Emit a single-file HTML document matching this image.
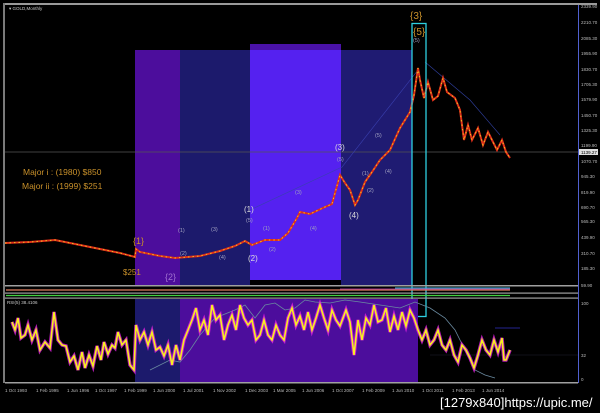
<!DOCTYPE html>
<html><head><meta charset="utf-8"><style>
html,body{margin:0;padding:0;background:#000;width:600px;height:413px;overflow:hidden}
svg{display:block}
text{font-family:"Liberation Sans",sans-serif}
</style></head><body>
<svg width="600" height="413" viewBox="0 0 600 413" xmlns="http://www.w3.org/2000/svg">
<rect width="600" height="413" fill="#000"/>
<!-- frame -->
<rect x="3" y="3" width="594" height="2" fill="#9a9a9a"/>
<rect x="3" y="3" width="2" height="380" fill="#7a7a7a"/>
<text x="9" y="10" font-size="4.5" fill="#ccc">▾ GOLD,Monthly</text>
<!-- main rects -->
<rect x="135" y="50" width="45" height="235" fill="#4c0d9c"/>
<rect x="180" y="50" width="70" height="235" fill="#1c1a6c"/>
<rect x="250" y="44" width="91" height="236" fill="#5521f0"/>
<rect x="250" y="44" width="91" height="6" fill="#4a12a8"/>
<rect x="341" y="50" width="71" height="235" fill="#1f1b72"/>
<!-- price grid line -->
<line x1="5" y1="152" x2="578" y2="152" stroke="#555" stroke-width="0.8"/>
<!-- diag trendlines -->
<polyline points="250,210 342,167 418,70" fill="none" stroke="#3a40b0" stroke-width="0.6"/>
<polyline points="425,62 470,100 500,135" fill="none" stroke="#3040a0" stroke-width="0.6"/>
<!-- price line -->
<polyline points="5,243 30,242 55,240 70,243 100,249 120,253 135,257 136,249 140,252 160,256 175,258 200,256 220,251 235,246 245,241 252,245 265,240 280,240 288,233 297,218 300,212 310,214 325,207 332,204 340,175 345,183 350,190 355,205 358,200 365,182 372,172 380,160 390,150 400,128 410,112 414,95 418,68 420,80 424,98 428,82 433,100 438,96 443,78 447,92 455,98 460,110 464,140 468,125 472,140 478,128 483,145 488,132 492,140 497,150 502,140 506,152 510,158" fill="none" stroke="#e0301a" stroke-width="2"/>
<polyline points="5,243 30,242 55,240 70,243 100,249 120,253 135,257 136,249 140,252 160,256 175,258 200,256 220,251 235,246 245,241 252,245 265,240 280,240 288,233 297,218 300,212 310,214 325,207 332,204 340,175 345,183 350,190 355,205 358,200 365,182 372,172 380,160 390,150 400,128 410,112 414,95 418,68 420,80 424,98 428,82 433,100 438,96 443,78 447,92 455,98 460,110 464,140 468,125 472,140 478,128 483,145 488,132 492,140 497,150 502,140 506,152 510,158" fill="none" stroke="#f0c020" stroke-width="1" stroke-dasharray="1.5 3"/>
<!-- cyan box -->
<rect x="412" y="23.5" width="14" height="293" fill="none" stroke="#2fd0e0" stroke-width="1.3"/>
<!-- labels -->
<g fill="#c8902a" font-size="8.5">
<text x="23" y="175">Major i : (1980) $850</text>
<text x="22" y="189">Major ii : (1999) $251</text>
<text x="410" y="19" font-size="10">{3}</text>
<text x="413" y="35" font-size="10">{5}</text>
<text x="133" y="244" font-size="9">{1}</text>
<text x="123" y="275" font-size="8">$251</text>
<text x="165" y="280" font-size="9" fill="#a070d0">{2}</text>
</g>
<g fill="#ddd" font-size="8">
<text x="244" y="212">(1)</text>
<text x="248" y="261">(2)</text>
<text x="335" y="150">(3)</text>
<text x="349" y="218">(4)</text>
</g>
<g fill="#a0a0c0" font-size="5.5">
<text x="178" y="232">(1)</text><text x="180" y="255">(2)</text><text x="211" y="231">(3)</text><text x="219" y="259">(4)</text>
<text x="246" y="222">(5)</text><text x="263" y="230">(1)</text><text x="269" y="251">(2)</text><text x="295" y="194">(3)</text>
<text x="310" y="230">(4)</text><text x="337" y="161">(5)</text><text x="362" y="175">(1)</text><text x="367" y="192">(2)</text>
<text x="375" y="137">(5)</text><text x="385" y="173">(4)</text><text x="413" y="42">(5)</text>
</g>
<!-- right axis -->
<line x1="578.5" y1="5" x2="578.5" y2="383" stroke="#5060d0" stroke-width="1"/>
<g fill="#bbb" font-size="4.5">
<text x="581" y="8">2339.90</text><text x="581" y="24">2210.70</text><text x="581" y="40">2085.30</text><text x="581" y="55">1955.90</text>
<text x="581" y="71">1830.70</text><text x="581" y="86">1705.30</text><text x="581" y="101">1579.90</text><text x="581" y="117">1450.70</text>
<text x="581" y="132">1325.30</text><text x="581" y="147">1199.90</text><text x="581" y="163">1070.70</text><text x="581" y="178">945.30</text>
<text x="581" y="194">819.90</text><text x="581" y="209">690.70</text><text x="581" y="223">565.30</text><text x="581" y="239">439.90</text>
<text x="581" y="255">310.70</text><text x="581" y="270">185.30</text><text x="581" y="287">59.90</text>
<text x="581" y="305">100</text><text x="581" y="357">32</text><text x="581" y="381">0</text>
</g>
<rect x="579" y="149" width="19" height="6" fill="#ddd"/>
<text x="581" y="154" font-size="4.5" fill="#000">1139.27</text>
<!-- separators -->
<rect x="5" y="285" width="573" height="1.5" fill="#a0a0a0"/>
<rect x="5" y="292.5" width="573" height="1.2" fill="#a0a0a0"/>
<rect x="5" y="297.5" width="573" height="1.2" fill="#a0a0a0"/>
<line x1="6" y1="290" x2="510" y2="290" stroke="#e08060" stroke-width="1.2"/>
<line x1="340" y1="289" x2="510" y2="289" stroke="#c040c0" stroke-width="0.8"/>
<line x1="395" y1="288" x2="510" y2="288" stroke="#40c0e0" stroke-width="1"/>
<line x1="6" y1="295.5" x2="510" y2="295.5" stroke="#40d040" stroke-width="1.2"/>
<!-- RSI pane -->
<rect x="135" y="299" width="45" height="83" fill="#1c1a6c"/>
<rect x="180" y="299" width="238" height="83" fill="#4c0d9c"/>
<text x="7" y="304" font-size="4.5" fill="#ccc">RSI(5) 38.4106</text>
<polyline points="150,370 170,360 180,362 190,350 200,335 215,318 235,310 245,305 255,318 265,305 275,303 285,310 295,308 305,300 315,302 330,303 345,300 360,302 380,305 400,308 415,302 430,308 445,318 455,330 465,350 475,370 485,375 495,378" fill="none" stroke="#6a8aa0" stroke-width="0.8"/>
<line x1="495" y1="328" x2="520" y2="328" stroke="#3030c0" stroke-width="0.8"/>
<line x1="430" y1="355" x2="578" y2="355" stroke="#223" stroke-width="0.6"/>
<polyline points="12,322 15,330 18,318 21,338 25,335 28,325 32,340 36,330 40,350 45,342 50,348 54,312 58,340 62,345 66,346 70,362 74,356 78,370 82,352 85,368 89,355 93,366 97,346 101,360 104,342 108,354 112,345 115,348 118,332 122,345 126,340 130,365 134,370 136,325 140,340 144,332 148,345 152,332 156,350 160,347 164,356 168,345 172,365 176,345 180,360 184,340 188,330 192,320 196,308 200,330 204,320 208,335 212,305 216,320 220,315 224,340 228,325 232,315 236,330 240,305 244,318 248,325 252,320 256,340 260,335 264,320 268,335 272,340 276,325 280,335 284,340 288,318 292,308 296,325 300,316 304,330 308,312 312,330 316,318 320,305 324,318 328,330 332,310 336,320 340,326 346,310 350,322 354,355 358,320 362,340 366,318 370,325 374,305 378,322 382,320 386,308 390,332 394,316 398,330 402,312 406,326 410,310 414,318 418,330 422,340 426,330 430,345 434,340 438,330 442,345 446,350 450,340 454,355 458,362 462,345 466,350 470,358 474,368 478,355 482,340 486,350 490,355 494,340 498,352 502,338 504,360 506,360 510,350" fill="none" stroke="#e020e0" stroke-width="3.5" opacity="0.8"/>
<polyline points="12,322 15,330 18,318 21,338 25,335 28,325 32,340 36,330 40,350 45,342 50,348 54,312 58,340 62,345 66,346 70,362 74,356 78,370 82,352 85,368 89,355 93,366 97,346 101,360 104,342 108,354 112,345 115,348 118,332 122,345 126,340 130,365 134,370 136,325 140,340 144,332 148,345 152,332 156,350 160,347 164,356 168,345 172,365 176,345 180,360 184,340 188,330 192,320 196,308 200,330 204,320 208,335 212,305 216,320 220,315 224,340 228,325 232,315 236,330 240,305 244,318 248,325 252,320 256,340 260,335 264,320 268,335 272,340 276,325 280,335 284,340 288,318 292,308 296,325 300,316 304,330 308,312 312,330 316,318 320,305 324,318 328,330 332,310 336,320 340,326 346,310 350,322 354,355 358,320 362,340 366,318 370,325 374,305 378,322 382,320 386,308 390,332 394,316 398,330 402,312 406,326 410,310 414,318 418,330 422,340 426,330 430,345 434,340 438,330 442,345 446,350 450,340 454,355 458,362 462,345 466,350 470,358 474,368 478,355 482,340 486,350 490,355 494,340 498,352 502,338 504,360 506,360 510,350" fill="none" stroke="#f8f020" stroke-width="1.6"/>
<!-- bottom axis -->
<rect x="5" y="382" width="573" height="1.5" fill="#a0a0a0"/>
<g fill="#bbb" font-size="4.5">
<text x="5" y="392">1 Oct 1993</text><text x="36" y="392">1 Feb 1995</text><text x="67" y="392">1 Jun 1996</text><text x="95" y="392">1 Oct 1997</text>
<text x="124" y="392">1 Feb 1999</text><text x="153" y="392">1 Jun 2000</text><text x="183" y="392">1 Jul 2001</text><text x="213" y="392">1 Nov 2002</text>
<text x="245" y="392">1 Dec 2003</text><text x="273" y="392">1 Mar 2005</text><text x="302" y="392">1 Jun 2006</text><text x="332" y="392">1 Oct 2007</text>
<text x="362" y="392">1 Feb 2009</text><text x="392" y="392">1 Jun 2010</text><text x="422" y="392">1 Oct 2011</text><text x="452" y="392">1 Feb 2013</text><text x="482" y="392">1 Jun 2014</text>
</g>
<text x="440" y="407" font-size="13" fill="#fff" font-family="Liberation Mono,monospace">[1279x840]https://upic.me/</text>
</svg>
</body></html>
